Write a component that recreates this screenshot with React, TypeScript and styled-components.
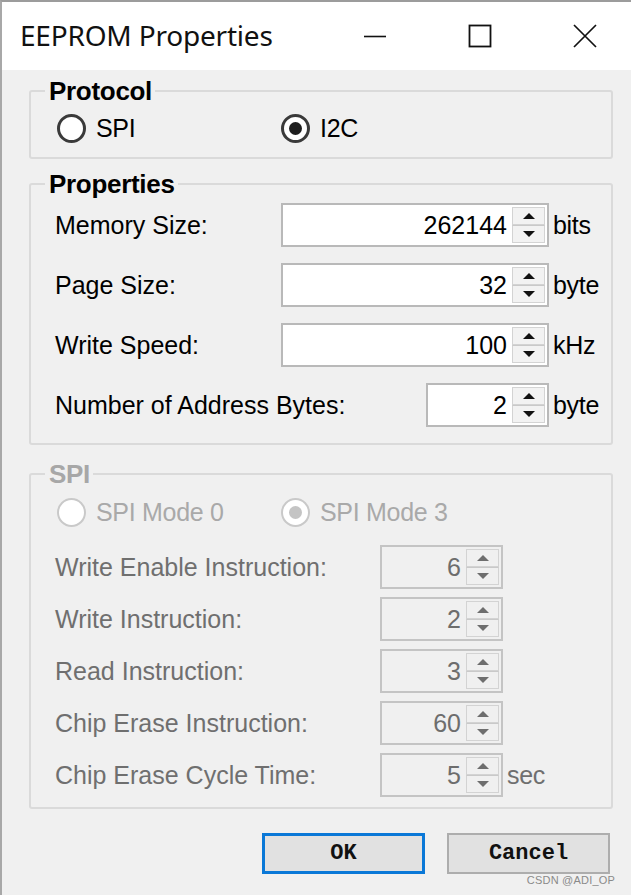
import React from "react";
import styled, { createGlobalStyle, css } from "styled-components";

const Global = createGlobalStyle`
  html, body { margin: 0; padding: 0; background: #f0f0f0; }
  body { font-family: "Liberation Sans", Arial, sans-serif; }
  * { box-sizing: border-box; }
`;

const Window = styled.div`
  position: relative;
  width: 631px;
  height: 895px;
  border-top: 2px solid #9c9c9c;
  border-left: 2px solid #a8a8a8;
  background: #f0f0f0;
  display: flex;
  flex-direction: column;
  overflow: hidden;
`;

const TitleBar = styled.div`
  height: 68px;
  background: #ffffff;
  display: flex;
  align-items: center;
  padding-left: 18px;
  margin-right: -6px;
`;

const Title = styled.div`
  flex: 1;
  font-family: "Noto Sans", "Open Sans", sans-serif;
  font-size: 28px;
  color: #111;
  letter-spacing: -0.2px;
  padding-bottom: 2px;
`;

const TitleButton = styled.div`
  width: 105px;
  height: 68px;
  display: flex;
  align-items: center;
  justify-content: center;
`;

const Content = styled.div`
  flex: 1;
  padding: 8px 18px 0 27px;
  display: flex;
  flex-direction: column;
`;

const Group = styled.fieldset<{ $mt?: number }>`
  margin: ${(p) => p.$mt ?? 0}px 0 0 0;
  padding: 0;
  border: 2px solid #dadada;
  border-radius: 3px;
  min-width: 0;
`;

const Legend = styled.legend<{ $disabled?: boolean }>`
  margin-left: 14px;
  padding: 0 3px 0 4px;
  font-size: 26px;
  line-height: 26px;
  font-weight: bold;
  letter-spacing: -0.3px;
  color: ${(p) => (p.$disabled ? "#a7a7a7" : "#000")};
`;

const RadioRow = styled.div<{ $mt: number; $mb: number }>`
  display: grid;
  grid-template-columns: 224px auto;
  margin: ${(p) => p.$mt}px 0 ${(p) => p.$mb}px 26px;
`;

const Option = styled.div<{ $disabled?: boolean }>`
  display: flex;
  align-items: center;
  gap: 10px;
  font-size: 25px;
  letter-spacing: -0.3px;
  color: ${(p) => (p.$disabled ? "#a9a9a9" : "#000")};
`;

const Circle = styled.span<{ $checked?: boolean; $disabled?: boolean }>`
  width: 29px;
  height: 29px;
  border-radius: 50%;
  background: #fff;
  border: ${(p) => (p.$disabled ? "2px solid #c9c9c9" : "3px solid #3a3a3a")};
  display: flex;
  align-items: center;
  justify-content: center;
  ${(p) =>
    p.$checked &&
    css`
      &::after {
        content: "";
        width: 13px;
        height: 13px;
        border-radius: 50%;
        background: ${p.$disabled ? "#c4c4c4" : "#1e1e1e"};
      }
    `}
`;

const Rows = styled.div<{ $mt: number; $mb: number }>`
  display: flex;
  flex-direction: column;
  margin: ${(p) => p.$mt}px 0 ${(p) => p.$mb}px 0;
`;

const Row = styled.div<{ $h: number }>`
  display: flex;
  align-items: center;
  height: ${(p) => p.$h}px;
  padding-left: 24px;
`;

const Label = styled.div<{ $disabled?: boolean }>`
  flex: 1;
  font-size: 25px;
  color: ${(p) => (p.$disabled ? "#6f6f6f" : "#000")};
`;

const Unit = styled.div<{ $w: number; $disabled?: boolean }>`
  width: ${(p) => p.$w}px;
  padding-left: 4px;
  font-size: 25px;
  letter-spacing: -0.3px;
  color: ${(p) => (p.$disabled ? "#6f6f6f" : "#000")};
`;

const Spin = styled.div<{ $w: number; $disabled?: boolean }>`
  width: ${(p) => p.$w}px;
  height: 44px;
  display: flex;
  border: 2px solid ${(p) => (p.$disabled ? "#c4c4c4" : "#b9b9b9")};
  background: ${(p) => (p.$disabled ? "#f0f0f0" : "#ffffff")};
`;

const Value = styled.div<{ $disabled?: boolean }>`
  flex: 1;
  text-align: right;
  padding-right: 5px;
  font-size: 25px;
  line-height: 40px;
  color: ${(p) => (p.$disabled ? "#6d6d6d" : "#000")};
`;

const Spinner = styled.div`
  width: 33px;
  margin: 2px 2px 2px 0;
  display: flex;
  flex-direction: column;
`;

const SpinBtn = styled.div<{ $disabled?: boolean }>`
  flex: 1;
  display: flex;
  align-items: center;
  justify-content: center;
  background: ${(p) => (p.$disabled ? "#f0f0f0" : "#f2f2f2")};
  border: 1px solid #d3d3d3;
  & + & {
    border-top: 1px solid #c9c9c9;
  }
`;

const Arrow = styled.span<{ $down?: boolean; $disabled?: boolean }>`
  width: 0;
  height: 0;
  border-left: 6px solid transparent;
  border-right: 6px solid transparent;
  ${(p) =>
    p.$down
      ? css`border-top: 6px solid ${p.$disabled ? "#6e6e6e" : "#111"};`
      : css`border-bottom: 6px solid ${p.$disabled ? "#6e6e6e" : "#111"};`}
`;

const ButtonBar = styled.div`
  display: flex;
  justify-content: flex-end;
  gap: 22px;
  margin-top: 24px;
  padding-right: 3px;
`;

const Button = styled.div<{ $default?: boolean }>`
  width: 163px;
  height: 41px;
  display: flex;
  align-items: center;
  justify-content: center;
  background: #e1e1e1;
  border: ${(p) => (p.$default ? "3px solid #0a78d7" : "2px solid #adadad")};
  font-family: "Liberation Mono", "Courier New", monospace;
  font-weight: bold;
  font-size: 22px;
  color: #111;
`;

const Watermark = styled.div`
  position: absolute;
  right: 16px;
  bottom: 9px;
  font-size: 11px;
  color: #8a8a8a;
  letter-spacing: 0.2px;
`;

type SpinProps = { value: string; width: number; disabled?: boolean };

function SpinBox({ value, width, disabled }: SpinProps) {
  return (
    <Spin $w={width} $disabled={disabled}>
      <Value $disabled={disabled}>{value}</Value>
      <Spinner>
        <SpinBtn $disabled={disabled}>
          <Arrow $disabled={disabled} />
        </SpinBtn>
        <SpinBtn $disabled={disabled}>
          <Arrow $down $disabled={disabled} />
        </SpinBtn>
      </Spinner>
    </Spin>
  );
}

const props = [
  { label: "Memory Size:", value: "262144", unit: "bits", w: 268 },
  { label: "Page Size:", value: "32", unit: "byte", w: 268 },
  { label: "Write Speed:", value: "100", unit: "kHz", w: 268 },
  { label: "Number of Address Bytes:", value: "2", unit: "byte", w: 123 },
];

const spi = [
  { label: "Write Enable Instruction:", value: "6", unit: "" },
  { label: "Write Instruction:", value: "2", unit: "" },
  { label: "Read Instruction:", value: "3", unit: "" },
  { label: "Chip Erase Instruction:", value: "60", unit: "" },
  { label: "Chip Erase Cycle Time:", value: "5", unit: "sec" },
];

export default function App() {
  return (
    <>
      <Global />
      <Window>
        <TitleBar>
          <Title>EEPROM Properties</Title>
          <TitleButton>
            <svg width="24" height="24" viewBox="0 0 24 24">
              <line x1="1" y1="12.5" x2="23" y2="12.5" stroke="#111" strokeWidth="1.6" />
            </svg>
          </TitleButton>
          <TitleButton>
            <svg width="24" height="24" viewBox="0 0 24 24">
              <rect x="1.5" y="1.5" width="21" height="21" fill="none" stroke="#111" strokeWidth="1.8" />
            </svg>
          </TitleButton>
          <TitleButton>
            <svg width="24" height="24" viewBox="0 0 24 24">
              <path d="M1 1 L23 23 M23 1 L1 23" stroke="#111" strokeWidth="1.7" />
            </svg>
          </TitleButton>
        </TitleBar>
        <Content>
          <Group>
            <Legend>Protocol</Legend>
            <RadioRow $mt={10} $mb={14}>
              <Option>
                <Circle />
                SPI
              </Option>
              <Option>
                <Circle $checked />
                I2C
              </Option>
            </RadioRow>
          </Group>

          <Group $mt={12}>
            <Legend>Properties</Legend>
            <Rows $mt={-2} $mb={8}>
              {props.map((r) => (
                <Row key={r.label} $h={60}>
                  <Label>{r.label}</Label>
                  <SpinBox value={r.value} width={r.w} />
                  <Unit $w={62}>{r.unit}</Unit>
                </Row>
              ))}
            </Rows>
          </Group>

          <Group $mt={16}>
            <Legend $disabled>SPI</Legend>
            <RadioRow $mt={11} $mb={14}>
              <Option $disabled>
                <Circle $disabled />
                SPI Mode 0
              </Option>
              <Option $disabled>
                <Circle $disabled $checked />
                SPI Mode 3
              </Option>
            </RadioRow>
            <Rows $mt={0} $mb={6}>
              {spi.map((r) => (
                <Row key={r.label} $h={52}>
                  <Label $disabled>{r.label}</Label>
                  <SpinBox value={r.value} width={123} disabled />
                  <Unit $w={108} $disabled>
                    {r.unit}
                  </Unit>
                </Row>
              ))}
            </Rows>
          </Group>

          <ButtonBar>
            <Button $default>OK</Button>
            <Button>Cancel</Button>
          </ButtonBar>
        </Content>
        <Watermark>CSDN @ADI_OP</Watermark>
      </Window>
    </>
  );
}
